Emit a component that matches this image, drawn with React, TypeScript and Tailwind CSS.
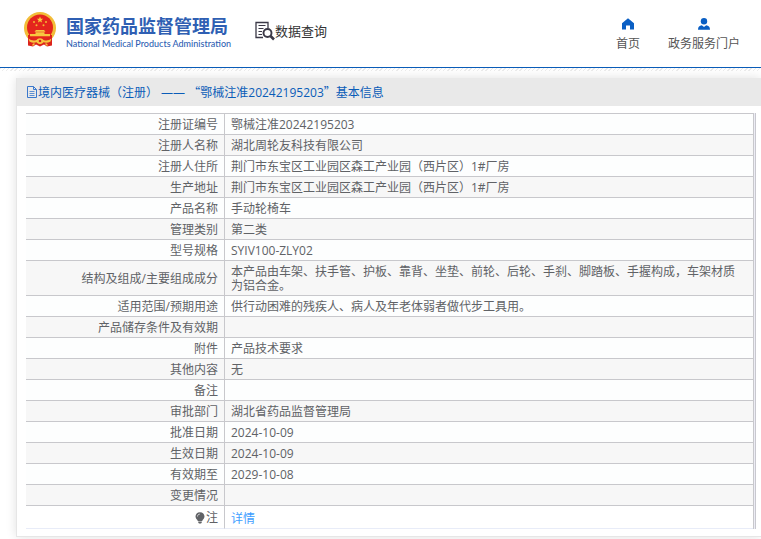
import React from 'react';

interface DetailRow {
  label: string;
  value: string;
}

const rows: DetailRow[] = [
  { label: '注册证编号', value: '鄂械注准20242195203' },
  { label: '注册人名称', value: '湖北周轮友科技有限公司' },
  { label: '注册人住所', value: '荆门市东宝区工业园区森工产业园（西片区）1#厂房' },
  { label: '生产地址', value: '荆门市东宝区工业园区森工产业园（西片区）1#厂房' },
  { label: '产品名称', value: '手动轮椅车' },
  { label: '管理类别', value: '第二类' },
  { label: '型号规格', value: 'SYIV100-ZLY02' },
  {
    label: '结构及组成/主要组成成分',
    value: '本产品由车架、扶手管、护板、靠背、坐垫、前轮、后轮、手刹、脚踏板、手握构成，车架材质为铝合金。',
  },
  { label: '适用范围/预期用途', value: '供行动困难的残疾人、病人及年老体弱者做代步工具用。' },
  { label: '产品储存条件及有效期', value: '' },
  { label: '附件', value: '产品技术要求' },
  { label: '其他内容', value: '无' },
  { label: '备注', value: '' },
  { label: '审批部门', value: '湖北省药品监督管理局' },
  { label: '批准日期', value: '2024-10-09' },
  { label: '生效日期', value: '2024-10-09' },
  { label: '有效期至', value: '2029-10-08' },
  { label: '变更情况', value: '' },
];

const Emblem: React.FC = () => (
  <svg viewBox="0 0 32 35" className="w-8 h-[35px] shrink-0" aria-hidden="true">
    <circle cx="16" cy="16" r="16" fill="#f2bd38" />
    <path d="M4 23 L4 33.500 L9 34.500 L12 32.500 L16 34.500 L20 32.500 L23 34.500 L28 33.500 L28 23 Z" fill="#dc231c" />
    <circle cx="16" cy="15.500" r="13" fill="#e4241d" />
    <path d="M16 4.500 l.9 2.200 2.300.1-1.800 1.500.6 2.300-2-1.300-2 1.300.6-2.300-1.800-1.500 2.300-.1z" fill="#f8cf3b" />
    <g fill="#f3b932">
      <circle cx="10" cy="10" r="1" />
      <circle cx="22" cy="10" r="1" />
      <circle cx="12.500" cy="13.300" r="1" />
      <circle cx="19.500" cy="13.300" r="1" />
    </g>
    <g fill="#f7c640">
      <path d="M12 18 h8 l1.500 1.800 h-11 z" />
      <path d="M11.500 20.300 h9 v1.700 h5.500 v2.300 h-20 v-2.300 h5.500 z" />
      <path d="M4.500 26.500 q3.500 3 8 1.500 a3.800 3 0 0 1 7 0 q4.500 1.500 8-1.500 l-1 3 q-3.500 2-7 .8 a3.800 3 0 0 1-7 0 q-3.500 1.200-7-.8z" />
      <path d="M9 31.500 h2 l-1 2 h-2z M21 31.500 h2 l1 2 h-2z" />
    </g>
    <circle cx="16" cy="29" r="1.300" fill="#dc231c" />
  </svg>
);

const SearchDocIcon: React.FC = () => (
  <svg viewBox="0 0 20 20" className="w-5 h-5 shrink-0" fill="none" stroke="#3b3947" aria-hidden="true">
    <path d="M13 7 V1.500 H1 V16.500 H8" strokeWidth="1.300" />
    <path d="M3.500 4.500 H10.500 M3.500 7.500 H8.500 M3.500 10.500 H7 M3.500 13.500 H7" strokeWidth="1.200" />
    <circle cx="12.500" cy="12" r="4" strokeWidth="1.900" />
    <path d="M15.500 15 L19 18.500" strokeWidth="2.600" />
  </svg>
);

const HomeIcon: React.FC = () => (
  <svg viewBox="0 0 12 12" className="w-3 h-3" fill="#0a5fc4" aria-hidden="true">
    <path d="M6 0.300 L12 5.300 V11.500 H8 V7.500 H4 V11.500 H0 V5.300 Z" />
  </svg>
);

const UserIcon: React.FC = () => (
  <svg viewBox="0 0 12 12" className="w-3 h-3" fill="#0a5fc4" aria-hidden="true">
    <circle cx="6" cy="3.200" r="3.200" />
    <path d="M0 11.700 C0 8.700 1.500 7.700 3.800 7.200 L6 9 L8.200 7.200 C10.500 7.700 12 8.700 12 11.700 Z" />
  </svg>
);

const DocumentIcon: React.FC = () => (
  <svg viewBox="0 0 12 12" className="w-3 h-3 shrink-0" fill="none" stroke="#3a78cc" aria-hidden="true">
    <path d="M1.500 0.500 H7.500 L10.500 3.500 V11.500 H1.500 Z M7.500 0.500 V3.500 H10.500" />
    <path d="M3.500 5.500 H8.500 M3.500 7.500 H8.500 M3.500 9.500 H8.500" strokeWidth="0.800" />
  </svg>
);

const BulbIcon: React.FC = () => (
  <svg viewBox="0 0 10 12" className="w-[10px] h-3 shrink-0" aria-hidden="true">
    <path d="M5 0.300 C7.800 0.300 9.500 2.400 9.500 4.600 C9.500 6.600 7.800 7.500 7.200 9 H2.800 C2.200 7.500 0.500 6.600 0.500 4.600 C0.500 2.400 2.200 0.300 5 0.300 Z M3.200 9.600 H6.800 V10.500 L6 11.500 H4 L3.200 10.500 Z" fill="#606266" />
    <path d="M2.500 4.500 C2.500 3 3.500 2.200 4.800 2.100" stroke="#ffffff" strokeWidth="0.700" fill="none" />
  </svg>
);

const Header: React.FC = () => (
  <header>
    <div className="flex items-start justify-between h-[68px] pl-6 pr-[21px] border-b border-[#0a5cb8]">
      <div className="flex items-start">
        <a href="#" className="flex items-start gap-[10px] pt-3">
          <Emblem />
          <span className="flex flex-col pt-1 whitespace-nowrap text-[#2f5fb3]">
            <span className="text-lg leading-5 font-bold">国家药品监督管理局</span>
            <span className="font-[Lato,sans-serif] text-[9px] leading-4 font-medium">
              National Medical Products Administration
            </span>
          </span>
        </a>
        <a href="#" className="flex items-center pt-[21px] ml-6 whitespace-nowrap text-[13px] leading-5 text-[#333]">
          <SearchDocIcon />
          数据查询
        </a>
      </div>
      <nav className="flex gap-7 pt-[18px] text-xs leading-5 text-[#555]">
        <a href="#" className="flex flex-col items-center gap-1">
          <HomeIcon />
          首页
        </a>
        <a href="#" className="flex flex-col items-center gap-1">
          <UserIcon />
          政务服务门户
        </a>
      </nav>
    </div>
    <div className="h-[3px] bg-[repeating-linear-gradient(135deg,#ececec_0px,#ececec_1px,#ffffff_1px,#ffffff_3px)]"></div>
  </header>
);

const App: React.FC = () => {
  return (
    <div lang="zh-CN" className="bg-white text-xs text-[#606266] font-['Open_Sans','Noto_Sans_CJK_SC',sans-serif] overflow-x-hidden">
      <Header />
      <main className="pt-[7px] pb-2 pl-4">
        <section className="border-l border-b border-[#e6e6e6] shadow-[0_0_10px_rgba(0,0,0,0.12)] bg-white">
          <h1 className="flex items-center h-7 pl-[9px] bg-[#e9e9e9] text-[#0a5cb8] whitespace-pre">
            <DocumentIcon />
            <span>
              境内医疗器械（注册） —— <span className="font-['Noto_Sans_CJK_SC',sans-serif]">“</span>
              鄂械注准20242195203
              <span className="font-['Noto_Sans_CJK_SC',sans-serif]">”</span>基本信息
            </span>
          </h1>
          <div className="pt-[7px] pb-[7px] pl-[9px] pr-[5px]">
            <div className="border-r border-[#c8c8cf] bg-[#ededf5] pr-px">
              <table className="w-full table-fixed border-separate border-spacing-0 border-t border-r border-[#c8c8cc] bg-white leading-[14px]">
                <tbody>
                  {rows.map((row) => (
                    <tr key={row.label} className="odd:bg-[#fdfefe] even:bg-[#f7f7f7]">
                      <th scope="row" className="w-[199px] pt-1 pb-[2px] pr-[6px] text-right font-normal border-r border-b border-[#c8c8cc]">
                        {row.label}
                      </th>
                      <td className="h-[21px] pt-1 pb-[2px] pl-[6px] pr-3 border-b border-[#c8c8cc]">{row.value}</td>
                    </tr>
                  ))}
                  <tr>
                    <th scope="row" className="pt-1 pb-[2px] pr-[6px] font-normal border-r border-r-[#c8c8cc] border-b border-b-[#e8ecf8]">
                      <span className="flex items-center justify-end gap-px">
                        <BulbIcon />
                        注
                      </span>
                    </th>
                    <td className="h-[23px] pt-[6px] pb-[2px] pl-[6px] border-b border-[#e8ecf8]">
                      <a href="#" className="text-[#409eff]">详情</a>
                    </td>
                  </tr>
                </tbody>
              </table>
            </div>
          </div>
        </section>
      </main>
    </div>
  );
};

export default App;
